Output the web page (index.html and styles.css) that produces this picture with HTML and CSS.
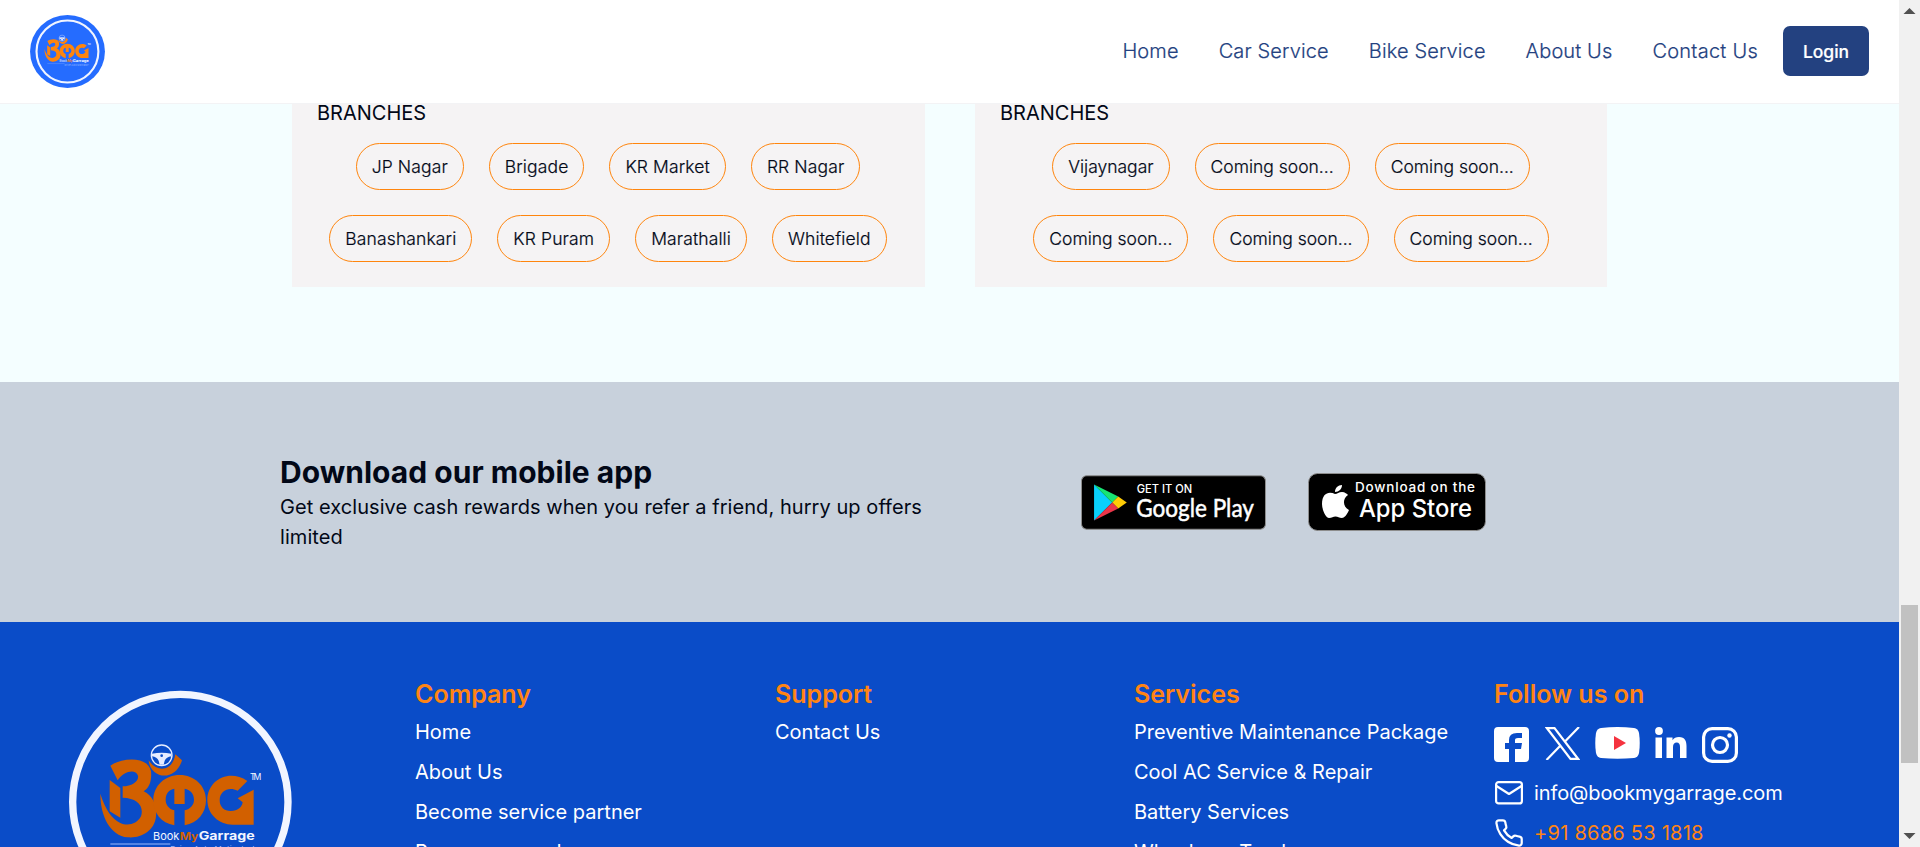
FILE: index.html
```html
<!DOCTYPE html>
<html lang="en">
<head>
<meta charset="utf-8">
<title>Book My Garrage</title>
<link rel="stylesheet" href="styles.css">
</head>
<body>
<div class="window">
  <div class="page">
    <header class="header">
      <svg class="header-logo" viewBox="29 46 783 762" preserveAspectRatio="none"><ellipse cx="420.500" cy="427" rx="391" ry="381" fill="#256cff"/><use href="#mark"/></svg>
      <nav class="nav">
        <a>Home</a><a>Car Service</a><a>Bike Service</a><a>About Us</a><a>Contact Us</a>
      </nav>
      <button class="login">Login</button>
    </header>

    <main class="locations">
      <section class="card card-wide">
        <h3>BRANCHES</h3>
        <div class="pills">
          <span>JP Nagar</span><span>Brigade</span><span>KR Market</span><span>RR Nagar</span><span>Banashankari</span><span>KR Puram</span><span>Marathalli</span><span>Whitefield</span>
        </div>
      </section>
      <section class="card">
        <h3>BRANCHES</h3>
        <div class="pills">
          <span>Vijaynagar</span><span>Coming soon...</span><span>Coming soon...</span><span>Coming soon...</span><span>Coming soon...</span><span>Coming soon...</span>
        </div>
      </section>
    </main>

    <section class="download">
      <div class="download-copy">
        <h2>Download our mobile app</h2>
        <p>Get exclusive cash rewards when you refer a friend, hurry up offers limited</p>
      </div>
      <div class="stores">
        <svg class="google" viewBox="0 0 184 54">
          <rect x=".5" y=".5" width="183" height="53" rx="5" fill="#000" stroke="#8d8d8d"/>
          <path d="M13 9V45L31 27Z" fill="#09d0fb"/>
          <path d="M13 9L37 21L31 27Z" fill="#17e574"/>
          <path d="M37 21L45.500 27L37 33L31 27Z" fill="#ffcb05"/>
          <path d="M13 45L31 27L37 33Z" fill="#ea3549"/>
          <g fill="#fff" class="badge-text">
            <text x="55.500" y="17.500" font-size="11.500" font-weight="500" textLength="55" lengthAdjust="spacingAndGlyphs">GET IT ON</text>
            <text class="google-name" x="55" y="41" font-size="25" textLength="117" lengthAdjust="spacingAndGlyphs">Google Play</text>
          </g>
        </svg>
        <svg class="apple" viewBox="0 0 178 58">
          <rect x=".5" y=".5" width="177" height="57" rx="9" fill="#000" stroke="#8d8d8d"/>
          <path d="M27 21C29 21 31 19 34 19C37 19 39 21 40 22C34 26 35 34 41 37C39 42 36 45 34 45C31 45 30 43.500 27.500 43.500C25 43.500 24 45 21 45C18 45 14 37 14 31C14 20 21 18 27 21ZM27 19C27 15 30 12 34 12C34 16 31 19 27 19Z" fill="#fff"/>
          <g fill="#fff" class="badge-text">
            <text x="47" y="19" font-size="13.500" font-weight="500" textLength="120">Download on the</text>
            <text x="51" y="44" font-size="24.500" font-weight="500" textLength="113" lengthAdjust="spacingAndGlyphs">App Store</text>
          </g>
        </svg>
      </div>
    </section>

    <footer class="footer">
      <div class="brand">
        <svg class="footer-logo" viewBox="29 46 783 762">
          <g id="mark">
            <circle cx="420" cy="427" r="323" fill="none" stroke="#f1f5ff" stroke-width="22"/>
            <g fill="currentColor">
              <path d="M210 318C240 295 322 286 332 335C335 365 326 385 310 395C340 410 350 440 347 470C343 515 300 537 262 533C210 528 180 470 180 402C195 450 215 478 240 490C262 500 290 494 302 470C312 438 290 415 247 414V380C275 380 296 365 293 348C285 326 250 335 232 362Z"/>
              <path d="M208 361L240 385V474L208 455Z"/>
              <path d="M325 302C330 358 405 368 425 302L405 284C397 335 350 340 325 302Z"/>
              <path d="M402 497C362 490 339 460 339 422C339 378 374 346 418 346C462 346 497 378 497 422C497 460 472 490 433 497V452C450 448 461 436 461 420C461 402 449 389 433 387V433H402V387C386 389 376 402 376 420C376 436 386 448 402 452Z"/>
              <path d="M621 364L592 393C565 380 538 394 538 422C538 448 562 461 588 451C600 446 606 438 607 428L592 416L640 390V495H577C535 495 501 463 501 421C501 363 565 326 621 364Z"/>
            </g>
            <circle cx="364" cy="287" r="31" fill="none" stroke="#e6ecff" stroke-width="4"/>
            <path d="M335 282Q364 277 393 282V290Q378 292 373 303L370 315H358L355 303Q350 292 335 290Z" fill="#e6ecff"/>
            <circle cx="364" cy="288" r="4" fill="#0a4cc8"/>
            <path d="M210 553H390" stroke="#9dbbff" stroke-width="3"/>
            <g class="mark-text" fill="#f4f7ff">
              <text x="629" y="362" font-size="26" textLength="34">TM</text>
              <text x="338" y="540" font-size="33" textLength="79" lengthAdjust="spacingAndGlyphs">Book</text>
              <text class="my" x="418" y="540" font-size="33" textLength="56" lengthAdjust="spacingAndGlyphs">My</text>
              <text x="475" y="540" font-size="36" textLength="168" font-weight="700" lengthAdjust="spacingAndGlyphs">Garrage</text>
              <text x="390" y="576" font-size="24" textLength="253" fill="#9dbbff">Drive Auto Motivator!</text>
            </g>
          </g>
        </svg>
      </div>
      <div class="col"><h4>Company</h4><a>Home</a><a>About Us</a><a>Become service partner</a><a>Become a vendor</a></div>
      <div class="col"><h4>Support</h4><a>Contact Us</a></div>
      <div class="col services"><h4>Services</h4><a>Preventive Maintenance Package</a><a>Cool AC Service &amp; Repair</a><a>Battery Services</a><a>Wheels on Track</a></div>
      <div class="col">
        <h4>Follow us on</h4>
        <div class="social">
          <svg width="35" height="35" viewBox="0 0 35 35"><path fill="#fff" d="M4 0H31Q35 0 35 4V31Q35 35 31 35H21V22H27L28 16H21V13Q21 11 24 11H28V6H23Q15 6 15 13V16H11V22H15V35H4Q0 35 0 31V4Q0 0 4 0Z"/></svg>
          <svg class="x" width="35" height="33" viewBox="0 0 35 33"><path fill="none" stroke="#fff" stroke-width="2.200" d="M2 1.200H9.500L33 31.800H25.500ZM34 0L19.500 15M15.500 18.500L1.500 33"/></svg>
          <svg class="yt" width="45" height="32" viewBox="0 0 45 32"><path fill="#fff" d="M6 1Q22.500-1 39 1Q43 1.500 44 6Q45.500 16 44 26Q43 30.500 39 31Q22.500 32.500 6 31Q2 30.500 1 26Q-.5 16 1 6Q2 1.500 6 1Z"/><path fill="#f5333f" d="M19 9V23L31 16Z"/></svg>
          <svg class="li" width="32" height="31" viewBox="0 0 32 31"><g fill="#fff"><circle cx="4" cy="4" r="3.900"/><path d="M.5 10.500H7V31H.5ZM11.500 10.500H17.500V13.300Q19.500 10 24 10C30 10 31.500 14 31.500 19V31H25V20Q25 15.500 21.800 15.500Q18 15.500 18 20V31H11.500Z"/></g></svg>
          <svg class="ig" width="36" height="36" viewBox="0 0 36 36"><g fill="none" stroke="#fff" stroke-width="3.200"><rect x="1.600" y="1.600" width="32.800" height="32.800" rx="8.500"/><circle cx="18" cy="18" r="7.500"/></g><circle cx="27.500" cy="8.500" r="2.200" fill="#fff"/></svg>
        </div>
        <div class="contact">
          <svg width="28" height="24" viewBox="0 0 28 24"><g fill="none" stroke="#fff" stroke-width="2.200" stroke-linejoin="round"><rect x="1.100" y="1.100" width="25.800" height="21.300" rx="2.500"/><path d="M1.500 5L14 13L26.500 5"/></g></svg>
          <span>info@bookmygarrage.com</span>
        </div>
        <div class="contact phone">
          <svg width="28" height="28" viewBox="1 1 22 22"><path fill="none" stroke="#fff" stroke-width="1.750" stroke-linejoin="round" d="M22 16.920v3a2 2 0 0 1-2.180 2 19.790 19.790 0 0 1-8.630-3.070 19.500 19.500 0 0 1-6-6 19.790 19.790 0 0 1-3.070-8.670A2 2 0 0 1 4.110 2h3a2 2 0 0 1 2 1.720c.127.960.361 1.903.7 2.810a2 2 0 0 1-.45 2.110L8.090 9.910a16 16 0 0 0 6 6l1.270-1.270a2 2 0 0 1 2.110-.45c.907.339 1.850.573 2.810.7A2 2 0 0 1 22 16.920z"/></svg>
          <span>+91 8686 53 1818</span>
        </div>
      </div>
    </footer>
  </div>
  <div class="scrollbar">
    <svg width="21" height="21" viewBox="0 0 21 21"><path d="M4.500 14H16.500L10.500 8Z" fill="#505050"/></svg>
    <div class="thumb"></div>
    <svg width="21" height="21" viewBox="0 0 21 21"><path d="M4.500 7H16.500L10.500 13Z" fill="#505050"/></svg>
  </div>
</div>
</body>
</html>
```
FILE: styles.css
```css
* { box-sizing: border-box; }
body { margin: 0; font: 400 20px/30px Inter, "Liberation Sans", sans-serif; color: #020817; overflow: hidden; }
h2, h3, h4, p { margin: 0; }
.window { display: flex; height: 847px; overflow: hidden; }
.page { width: 1899px; flex: none; display: flex; flex-direction: column; }

.header { flex: none; height: 104px; padding: 0 30px 1px; display: flex; align-items: center; background: #fff; border-bottom: 1px solid #f3f3f5; }
.header-logo { width: 75px; height: 73px; color: #ff850d; }
.nav { display: flex; gap: 40px; margin-left: auto; margin-right: 25px; font-weight: 300; letter-spacing: .13px; color: #234180; -webkit-text-stroke: .2px; }
.nav a { white-space: nowrap; }
.nav a:last-child { letter-spacing: .25px; }
.login { width: 86px; height: 50px; padding: 0; border: 0; border-radius: 7px; background: #234180; color: #fff; font: 500 17.5px/25px Inter, sans-serif; -webkit-text-stroke: .2px; }

.locations { flex: none; height: 278px; padding-left: 292px; display: flex; align-items: flex-start; gap: 50px; background: #f4feff; }
.card { width: 632px; height: 183px; background: #f5f3f4; padding: 0 25px; }
.card-wide { width: 633px; }
.card h3 { font-size: 20px; line-height: 28px; font-weight: 400; margin-top: -5px; }
.pills { display: flex; flex-wrap: wrap; justify-content: center; gap: 25px; margin-top: 16px; }
.pills span { height: 47px; padding: 10px 15px; border: 1px solid #ff850d; border-radius: 25px; font-size: 17.5px; line-height: 25px; font-weight: 300; -webkit-text-stroke: .2px; }
.card-wide .pills { margin-left: -1px; }
.card-wide .pills span { letter-spacing: .12px; }

.download { flex: none; height: 240px; padding-left: 280px; display: flex; align-items: center; background: #c8d1dc; }
.download-copy { width: 670px; }
.download h2 { font-size: 30px; line-height: 39px; font-weight: 700; letter-spacing: .02px; }
.download p { letter-spacing: .06px; }
.stores { display: flex; align-items: center; margin-left: 131px; }
.google { width: 185px; height: 55px; margin-right: 42px; }
.apple { width: 178px; height: 58px; }
.badge-text, .mark-text { font-family: Inter, sans-serif; }
.google-name { font-family: Lato, sans-serif; font-weight: 400; stroke: #fff; stroke-width: .5px; }
.my { fill: currentColor; font-weight: 700; }

.footer { flex: none; height: 225px; overflow: hidden; display: grid; grid-template-columns: 365px 360px 359px 360px 1fr; padding: 55px 0 0 50px; background: #0a4cc8; color: #fff; }
.footer-logo { display: block; width: 261px; height: 254px; margin-top: -2px; color: #d26000; }
.col { display: flex; flex-direction: column; }
.col h4 { font-size: 25px; line-height: 35px; font-weight: 600; color: #ff8413; }
.col a { height: 40px; line-height: 40px; white-space: nowrap; }
.social { display: flex; align-items: flex-start; height: 61px; padding-top: 15px; }
.x { margin-left: 16px; }
.yt { margin-left: 15px; }
.li { margin-left: 15px; }
.ig { margin-left: 15px; }
.contact { display: flex; align-items: center; gap: 11px; height: 40px; padding-left: 1px; letter-spacing: -.1px; }
.phone { color: #ff8413; letter-spacing: .25px; }

.scrollbar { width: 21px; flex: none; display: flex; flex-direction: column; align-items: center; background: #f1f1f1; }
.thumb { width: 17px; height: 158px; margin: 584px 0 63px; background: #c1c1c1; flex: none; }
```
